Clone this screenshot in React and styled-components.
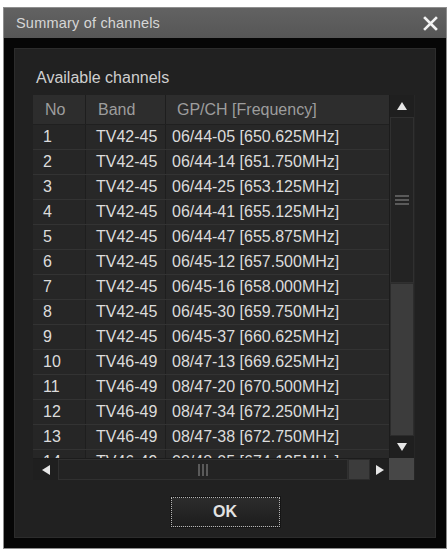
import React from "react";
import styled, { createGlobalStyle } from "styled-components";

const Global = createGlobalStyle`
  html, body { margin: 0; padding: 0; background: #ffffff; }
  body { font-family: "Liberation Sans", Arial, sans-serif; }
`;

const Page = styled.div`
  padding: 7px 0 0 3px;
`;

const Dialog = styled.div`
  width: 444px;
  height: 542px;
  box-sizing: border-box;
  border: 1px solid #8e8e8e;
  background: #060606;
  display: flex;
  flex-direction: column;
`;

const TitleBar = styled.div`
  height: 30px;
  flex: 0 0 30px;
  display: flex;
  align-items: center;
  justify-content: space-between;
  padding: 0 7px 0 12px;
  background: linear-gradient(#626262, #565656);
`;

const Title = styled.span`
  font-size: 14.5px;
  letter-spacing: 0.2px;
  color: #d6d6d6;
`;

const CloseButton = styled.button`
  width: 18px;
  height: 18px;
  padding: 0;
  border: 0;
  background: transparent;
  display: flex;
  align-items: center;
  justify-content: center;
`;

const Body = styled.div`
  flex: 1;
  padding: 10px 10px 10px 10px;
  display: flex;
`;

const Panel = styled.div`
  flex: 1;
  box-sizing: border-box;
  background: #212121;
  border: 1px solid #2c2c2c;
  padding: 20px 20px 10px 18px;
  display: flex;
  flex-direction: column;
`;

const GroupLabel = styled.div`
  font-size: 16px;
  line-height: 18px;
  color: #cfcfcf;
  margin: 0 0 8px 3px;
`;

const TableFrame = styled.div`
  display: grid;
  grid-template-columns: 356px 25px;
  grid-template-rows: 363px 22px;
  background: #262626;
`;

const DataArea = styled.div`
  overflow: hidden;
  display: flex;
  flex-direction: column;
`;

const Row = styled.div`
  display: grid;
  grid-template-columns: 53px 80px 1fr;
  flex: 0 0 ${(p) => (p.$header ? 30 : 25)}px;
  height: ${(p) => (p.$header ? 30 : 25)}px;
  box-sizing: border-box;
  background: ${(p) => (p.$header ? "#2d2d2d" : "#282828")};
  border-bottom: 1px solid ${(p) => (p.$header ? "#202020" : "#333333")};
`;

const Cell = styled.div`
  display: flex;
  align-items: center;
  padding-left: ${(p) => p.$pad}px;
  font-size: 16px;
  white-space: nowrap;
  color: ${(p) => (p.$header ? "#9d9d9d" : "#dcdcdc")};
  border-right: ${(p) => (p.$last ? "none" : "1px solid #1e1e1e")};
  background: ${(p) => (p.$first && !p.$header ? "#262626" : "transparent")};
`;

const VScroll = styled.div`
  display: flex;
  flex-direction: column;
  background: #242424;
  border-left: 1px solid #1c1c1c;
`;

const HScroll = styled.div`
  display: flex;
  background: #242424;
  border-top: 1px solid #1c1c1c;
`;

const ArrowBtn = styled.div`
  flex: 0 0 ${(p) => p.$size}px;
  display: flex;
  align-items: center;
  justify-content: center;
  background: #1f1f1f;
`;

const Thumb = styled.div`
  flex: 0 0 ${(p) => p.$size}px;
  box-sizing: border-box;
  background: #232323;
  border: 1px solid #303030;
  display: flex;
  flex-direction: ${(p) => (p.$vertical ? "column" : "row")};
  align-items: center;
  justify-content: center;
  gap: 2px;
`;

const GripLine = styled.span`
  display: block;
  background: #5a5a5a;
  width: ${(p) => (p.$vertical ? "14px" : "2px")};
  height: ${(p) => (p.$vertical ? "2px" : "12px")};
`;

const Track = styled.div`
  flex: 1;
  background: #3c3c3c;
  border: 1px solid #2c2c2c;
  box-sizing: border-box;
`;

const Corner = styled.div`
  background: #474747;
`;

const ButtonRow = styled.div`
  display: flex;
  justify-content: center;
  margin-top: 17px;
  padding-left: 2px;
`;

const OkButton = styled.button`
  width: 109px;
  height: 30px;
  box-sizing: border-box;
  border: 1px dotted #b4b4b4;
  outline: 1px solid #151515;
  background: linear-gradient(#2c2c2c, #1d1d1d);
  color: #e2e2e2;
  font-family: "Liberation Sans", Arial, sans-serif;
  font-size: 16px;
  font-weight: 700;
  padding: 0;
`;

const Tri = ({ dir }) => {
  const pts = {
    up: "5,1 10,9 0,9",
    down: "0,1 10,1 5,9",
    left: "9,0 9,10 1,5",
    right: "1,0 1,10 9,5",
  }[dir];
  return (
    <svg width="10" height="10" viewBox="0 0 10 10">
      <polygon points={pts} fill="#e6e6e6" />
    </svg>
  );
};

const rows = [
  ["1", "TV42-45", "06/44-05 [650.625MHz]"],
  ["2", "TV42-45", "06/44-14 [651.750MHz]"],
  ["3", "TV42-45", "06/44-25 [653.125MHz]"],
  ["4", "TV42-45", "06/44-41 [655.125MHz]"],
  ["5", "TV42-45", "06/44-47 [655.875MHz]"],
  ["6", "TV42-45", "06/45-12 [657.500MHz]"],
  ["7", "TV42-45", "06/45-16 [658.000MHz]"],
  ["8", "TV42-45", "06/45-30 [659.750MHz]"],
  ["9", "TV42-45", "06/45-37 [660.625MHz]"],
  ["10", "TV46-49", "08/47-13 [669.625MHz]"],
  ["11", "TV46-49", "08/47-20 [670.500MHz]"],
  ["12", "TV46-49", "08/47-34 [672.250MHz]"],
  ["13", "TV46-49", "08/47-38 [672.750MHz]"],
  ["14", "TV46-49", "08/48-05 [674.125MHz]"],
];

export default function App() {
  return (
    <>
      <Global />
      <Page>
        <Dialog>
          <TitleBar>
            <Title>Summary of channels</Title>
            <CloseButton aria-label="Close">
              <svg width="15" height="15" viewBox="0 0 15 15">
                <path d="M2 2 L13 13 M13 2 L2 13" stroke="#f2f2f2" strokeWidth="2.6" strokeLinecap="square" />
              </svg>
            </CloseButton>
          </TitleBar>
          <Body>
            <Panel>
              <GroupLabel>Available channels</GroupLabel>
              <TableFrame>
                <DataArea>
                  <Row $header>
                    <Cell $header $first $pad={12}>No</Cell>
                    <Cell $header $pad={12}>Band</Cell>
                    <Cell $header $last $pad={11}>GP/CH [Frequency]</Cell>
                  </Row>
                  {rows.map(([no, band, ch]) => (
                    <Row key={no}>
                      <Cell $first $pad={10}>{no}</Cell>
                      <Cell $pad={10}>{band}</Cell>
                      <Cell $last $pad={6}>{ch}</Cell>
                    </Row>
                  ))}
                </DataArea>
                <VScroll>
                  <ArrowBtn $size={22}><Tri dir="up" /></ArrowBtn>
                  <Thumb $vertical $size={166}>
                    <GripLine $vertical />
                    <GripLine $vertical />
                    <GripLine $vertical />
                  </Thumb>
                  <Track />
                  <ArrowBtn $size={22}><Tri dir="down" /></ArrowBtn>
                </VScroll>
                <HScroll>
                  <ArrowBtn $size={25}><Tri dir="left" /></ArrowBtn>
                  <Thumb $size={290}>
                    <GripLine />
                    <GripLine />
                    <GripLine />
                  </Thumb>
                  <Track />
                  <ArrowBtn $size={19}><Tri dir="right" /></ArrowBtn>
                </HScroll>
                <Corner />
              </TableFrame>
              <ButtonRow>
                <OkButton>OK</OkButton>
              </ButtonRow>
            </Panel>
          </Body>
        </Dialog>
      </Page>
    </>
  );
}
